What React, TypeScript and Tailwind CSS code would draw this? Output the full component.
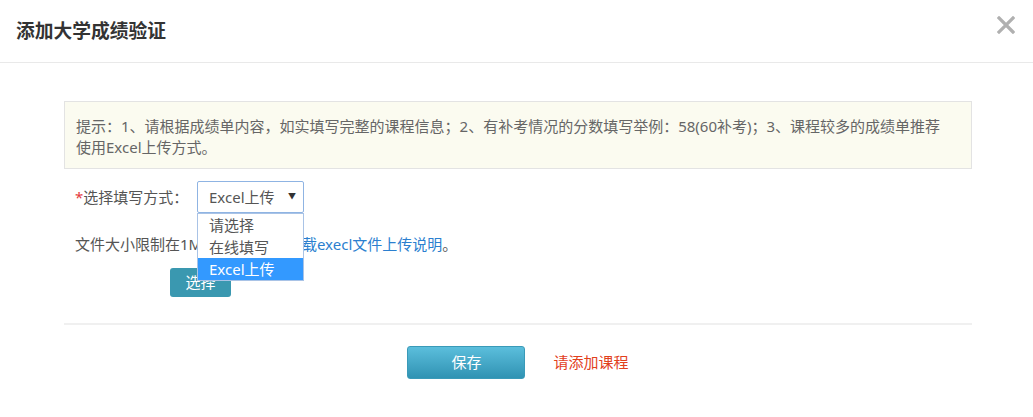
import { useState } from 'react';

const OPTIONS = ['请选择', '在线填写', 'Excel上传'];

export default function App() {
  const [mode, setMode] = useState('Excel上传');
  const [open, setOpen] = useState(true);

  return (
    <div className="w-[1033px] h-[417px] bg-white font-['Noto_Sans','Noto_Sans_CJK_SC',sans-serif] text-[15px] text-[#555]">
      {/* Header */}
      <div className="h-[63px] border-b border-[#e9e9e9] flex items-center justify-between pl-4 pr-[18px]">
        <h1 className="text-[18.75px] font-bold text-[#333] leading-none">添加大学成绩验证</h1>
        <button type="button" className="w-[18px] h-[18px] -mt-[12px]">
          <svg viewBox="0 0 18 18" width="18" height="18">
            <path d="M2 2 L16 16 M16 2 L2 16" stroke="#b0b0b0" strokeWidth="3.2" strokeLinecap="square" />
          </svg>
        </button>
      </div>

      {/* Body */}
      <div className="pl-[64px] pr-[61px] pt-[38px]">
        {/* Hint */}
        <div className="bg-[#fbfbf0] border border-[#e3e3e3] pl-[11px] pr-3 pt-[14px] pb-[10px] leading-[21px] text-[#666] whitespace-nowrap">
          提示：1、请根据成绩单内容，如实填写完整的课程信息；2、有补考情况的分数填写举例：58(60补考)；3、课程较多的成绩单推荐
          <br />
          使用Excel上传方式。
        </div>

        {/* Mode select */}
        <div className="mt-3 pl-[11px] flex items-center">
          <label className="w-[122px] leading-[21px]">
            <span className="text-[#e4393c]">*</span>选择填写方式：
          </label>
          <div className="relative">
            <button
              type="button"
              onClick={() => setOpen(!open)}
              className="w-[107px] h-[32px] border border-[#8fb4e3] rounded-[2px] bg-white flex items-center justify-between pl-[11px] pr-[7px] text-[#555]"
            >
              <span>{mode}</span>
              <span className="text-[8px] text-[#333] -mt-[2px]">▼</span>
            </button>
            {open && (
              <div className="absolute left-0 top-[32px] w-[107px] bg-white border border-[#a9c3e6] z-10">
                {OPTIONS.map((o) => (
                  <div
                    key={o}
                    onClick={() => {
                      setMode(o);
                      setOpen(false);
                    }}
                    className={`h-[22px] leading-[22px] pl-[11px] ${
                      o === mode ? 'bg-[#3399ff] text-white' : 'text-[#555]'
                    }`}
                  >
                    {o}
                  </div>
                ))}
              </div>
            )}
          </div>
        </div>

        {/* File tip */}
        <p className="mt-[21px] pl-[11px] leading-[21px]">
          文件大小限制在1MB以内，点击下<a className="text-[#2b7fcf]">载execl文件上传说明</a>。
        </p>

        <button
          type="button"
          className="mt-[13px] ml-[106px] w-[61px] h-[29px] rounded-[3px] bg-[#3a98b0] text-white block"
        >
          选择
        </button>

        <div className="mt-[26px] border-t-2 border-[#f0f0f0]" />

        {/* Footer */}
        <div className="mt-[21px] flex items-center justify-center gap-7">
          <button
            type="button"
            className="w-[118px] h-[33px] rounded-[3px] bg-gradient-to-b from-[#5bbedc] to-[#2f93b3] border border-[#3a9ab8] text-white"
          >
            保存
          </button>
          <span className="text-[#e2401c]">请添加课程</span>
        </div>
      </div>
    </div>
  );
}
